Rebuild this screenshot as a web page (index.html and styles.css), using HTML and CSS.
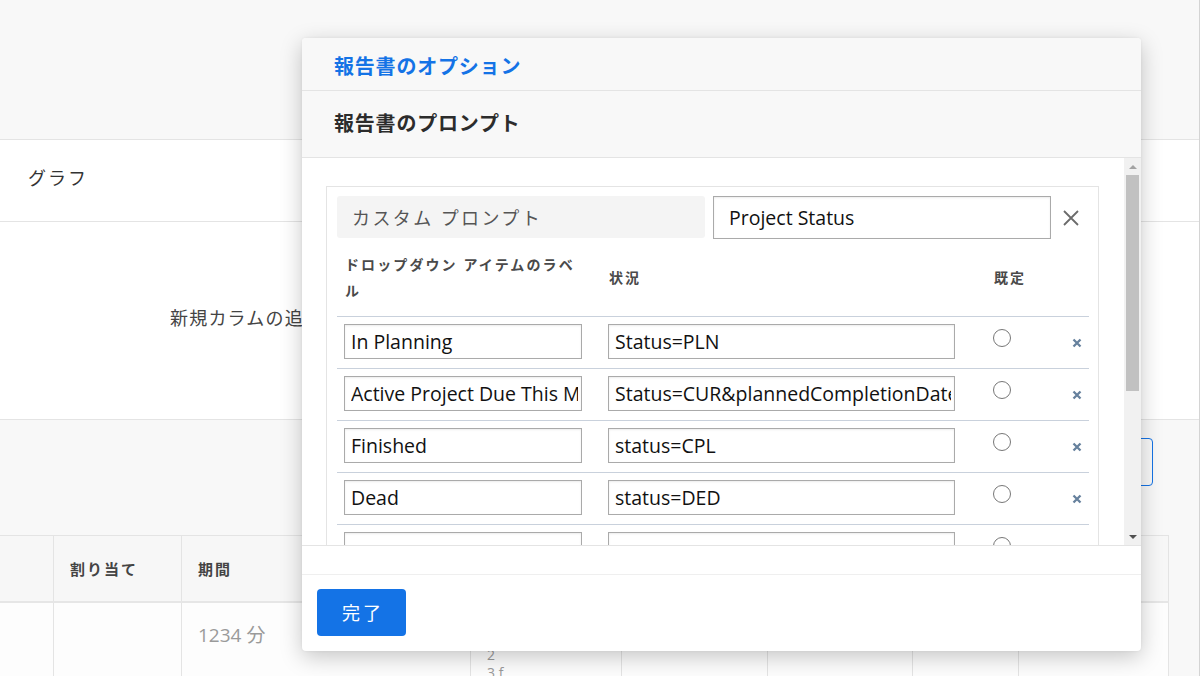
FILE: index.html
```html
<!DOCTYPE html>
<html lang="ja">
<head>
<meta charset="utf-8">
<title>報告書のオプション</title>
<link rel="stylesheet" href="styles.css">
</head>
<body>
<div class="page">
  <div class="topband"></div>
  <div class="row-graph">グラフ</div>
  <div class="row-new">新規カラムの追加</div>
  <div class="toolbar"><button class="outline-btn" type="button"></button></div>
  <div class="grid">
    <div class="grid-head">
      <div class="gc"></div>
      <div class="gc">割り当て</div>
      <div class="gc">期間</div>
      <div class="gc"></div>
      <div class="gc"></div>
      <div class="gc"></div>
      <div class="gc"></div>
      <div class="gc"></div>
    </div>
    <div class="grid-row">
      <div class="gd"></div>
      <div class="gd"></div>
      <div class="gd">1234 分</div>
      <div class="gd gd-small">1<br>2<br>3 f</div>
      <div class="gd"></div>
      <div class="gd"></div>
      <div class="gd"></div>
      <div class="gd"></div>
    </div>
  </div>
</div>

<div class="modal">
  <div class="m-head"><h1 class="m-title">報告書のオプション</h1></div>
  <div class="m-sub"><h2 class="m-subtitle">報告書のプロンプト</h2></div>
  <div class="m-body">
    <div class="m-content">
      <div class="panel">
        <div class="prompt-row">
          <div class="prompt-label">カスタム プロンプト</div>
          <input class="prompt-input" type="text" value="Project Status">
          <svg class="close" width="16" height="16" viewBox="0 0 16 16"><path d="M1 1L15 15M15 1L1 15" stroke="#6b6b6b" stroke-width="1.8" fill="none"/></svg>
        </div>
        <div class="opt-head">
          <div class="oh oh-label">ドロップダウン アイテムのラベル</div>
          <div class="oh">状況</div>
          <div class="oh">既定</div>
          <div class="oh"></div>
        </div>
        <div class="opt-row">
          <div class="oc"><input class="in in-label" type="text" value="In Planning"></div>
          <div class="oc"><input class="in in-status" type="text" value="Status=PLN"></div>
          <div class="oc oc-radio"><input class="radio" type="radio" name="def"></div>
          <div class="oc oc-x"><svg width="10" height="10" viewBox="0 0 10 10"><path d="M1.5 1.5L8.5 8.5M8.5 1.5L1.5 8.5" stroke="#66819d" stroke-width="2.3" fill="none"/></svg></div>
        </div>
        <div class="opt-row">
          <div class="oc"><input class="in in-label" type="text" value="Active Project Due This Month"></div>
          <div class="oc"><input class="in in-status" type="text" value="Status=CUR&amp;plannedCompletionDate=$$TODAYe"></div>
          <div class="oc oc-radio"><input class="radio" type="radio" name="def"></div>
          <div class="oc oc-x"><svg width="10" height="10" viewBox="0 0 10 10"><path d="M1.5 1.5L8.5 8.5M8.5 1.5L1.5 8.5" stroke="#66819d" stroke-width="2.3" fill="none"/></svg></div>
        </div>
        <div class="opt-row">
          <div class="oc"><input class="in in-label" type="text" value="Finished"></div>
          <div class="oc"><input class="in in-status" type="text" value="status=CPL"></div>
          <div class="oc oc-radio"><input class="radio" type="radio" name="def"></div>
          <div class="oc oc-x"><svg width="10" height="10" viewBox="0 0 10 10"><path d="M1.5 1.5L8.5 8.5M8.5 1.5L1.5 8.5" stroke="#66819d" stroke-width="2.3" fill="none"/></svg></div>
        </div>
        <div class="opt-row">
          <div class="oc"><input class="in in-label" type="text" value="Dead"></div>
          <div class="oc"><input class="in in-status" type="text" value="status=DED"></div>
          <div class="oc oc-radio"><input class="radio" type="radio" name="def"></div>
          <div class="oc oc-x"><svg width="10" height="10" viewBox="0 0 10 10"><path d="M1.5 1.5L8.5 8.5M8.5 1.5L1.5 8.5" stroke="#66819d" stroke-width="2.3" fill="none"/></svg></div>
        </div>
        <div class="opt-row">
          <div class="oc"><input class="in in-label" type="text" value=""></div>
          <div class="oc"><input class="in in-status" type="text" value=""></div>
          <div class="oc oc-radio"><input class="radio" type="radio" name="def"></div>
          <div class="oc oc-x"></div>
        </div>
      </div>
    </div>
    <div class="sbar">
      <div class="sb-btn"><span class="tri-up"></span></div>
      <div class="sb-thumb"></div>
      <div class="sb-track"></div>
      <div class="sb-btn"><span class="tri-down"></span></div>
    </div>
  </div>
  <div class="m-strip"></div>
  <div class="m-foot"><button class="done" type="button">完了</button></div>
</div>
</body>
</html>
```

FILE: styles.css
```css
* {
  box-sizing: border-box;
  margin: 0;
  padding: 0;
}

html, body {
  width: 1200px;
  height: 676px;
  overflow: hidden;
  background: #f8f8f8;
}

body {
  position: relative;
  font-family: "Open Sans", "Noto Sans CJK JP", sans-serif;
  color: #333;
}

.page {
  width: 1200px;
  height: 676px;
  overflow: hidden;
  background: #f8f8f8;
  border-right: 1px solid #d4d4d4;
}

.topband {
  height: 140px;
  border-bottom: 1px solid #e4e4e4;
}

.row-graph {
  height: 82px;
  background: #fff;
  border-bottom: 1px solid #e4e4e4;
  padding: 26px 0 0 28px;
  font-size: 18px;
  line-height: 24px;
  letter-spacing: 2px;
  color: #333;
}

.row-new {
  height: 197px;
  background: #fff;
  padding: 84px 0 0 170px;
  font-size: 18px;
  line-height: 24px;
  letter-spacing: 1.2px;
  color: #444;
}

.toolbar {
  height: 116px;
  border-top: 1px solid #e4e4e4;
  display: flex;
  justify-content: flex-end;
  padding: 18px 46px 0 0;
}

.outline-btn {
  width: 114px;
  height: 48px;
  border: 1px solid #1473e6;
  border-radius: 4px;
  background: transparent;
}

.grid {
  width: 1169px;
  border-top: 1px solid #e4e4e4;
  background: #fff;
}

.grid-head,
.grid-row {
  display: grid;
  grid-template-columns: 54px 128px 289px 151px 146px 145px 106px 150px;
}

.grid-head {
  height: 67px;
  background: #f7f7f7;
  border-bottom: 2px solid #e6e6e6;
}

.gc {
  border-right: 1px solid #e4e4e4;
  display: flex;
  align-items: center;
  padding-left: 16px;
  font-weight: 700;
  font-size: 15px;
  letter-spacing: 2px;
  color: #444;
}

.grid-row {
  height: 80px;
  background: #fdfdfd;
}

.gd {
  border-right: 1px solid #e4e4e4;
  padding: 20px 0 0 16px;
  color: #9a9a9a;
  font-size: 19px;
  line-height: 24px;
}

.gd-small {
  font-size: 14px;
  line-height: 18px;
  padding-top: 25px;
}

/* modal */
.modal {
  position: absolute;
  left: 302px;
  top: 38px;
  width: 839px;
  height: 613px;
  background: #fff;
  border-radius: 4px;
  box-shadow: 0 6px 22px rgba(0, 0, 0, 0.22), 0 0 3px rgba(0, 0, 0, 0.06);
  display: flex;
  flex-direction: column;
  overflow: hidden;
}

.m-head {
  height: 53px;
  flex: none;
  background: #f8f8f8;
  border-bottom: 1px solid #e4e4e4;
  padding: 2px 0 0 32px;
  display: flex;
  align-items: center;
}

.m-title {
  font-size: 20px;
  font-weight: 700;
  letter-spacing: 0.8px;
  color: #1473e6;
}

.m-sub {
  height: 67px;
  flex: none;
  background: #f8f8f8;
  border-bottom: 1px solid #e4e4e4;
  padding: 0 0 3px 32px;
  display: flex;
  align-items: center;
}

.m-subtitle {
  font-size: 20px;
  font-weight: 700;
  letter-spacing: 0.8px;
  color: #2c2c2c;
}

.m-body {
  height: 387px;
  flex: none;
  display: flex;
}

.m-content {
  flex: 1;
  overflow: hidden;
  padding: 28px 25px 0 24px;
}

.panel {
  border: 1px solid #e4e4e4;
  padding: 9px 9px 0 10px;
}

.prompt-row {
  display: flex;
  align-items: center;
  height: 43px;
}

.prompt-label {
  align-self: flex-start;
  width: 368px;
  height: 42px;
  background: #f4f4f4;
  border-radius: 3px;
  padding-left: 15px;
  display: flex;
  align-items: center;
  font-size: 18px;
  letter-spacing: 2.4px;
  color: #555;
}

.prompt-input {
  margin-left: 8px;
  width: 338px;
  height: 43px;
  border: 1px solid #aaa;
  padding: 0 4px 0 15px;
  font-family: "Open Sans", "Noto Sans CJK JP", sans-serif;
  font-size: 19.5px;
  color: #111;
  outline: none;
  box-shadow: inset 0 1px 2px rgba(0, 0, 0, 0.08);
}

.close {
  margin-left: 12px;
  flex: none;
}

.opt-head,
.opt-row {
  display: grid;
  grid-template-columns: 264px 385px 84px 1fr;
  border-bottom: 1px solid #c9d1dc;
}

.opt-head {
  height: 78px;
  align-items: center;
}

.oh {
  padding-left: 8px;
  font-weight: 700;
  font-size: 14px;
  line-height: 26px;
  letter-spacing: 2.1px;
  color: #4a4a4a;
}

.oh-label {
  max-width: 248px;
}

.opt-row {
  height: 52px;
  align-items: start;
}

.oc {
  padding: 7px 0 0 7px;
}

.in {
  display: block;
  height: 35px;
  border: 1px solid #aaa;
  padding: 0 3px 0 6px;
  font-family: "Open Sans", "Noto Sans CJK JP", sans-serif;
  font-size: 19.5px;
  color: #111;
  outline: none;
  background: #fff;
  box-shadow: inset 0 1px 2px rgba(0, 0, 0, 0.08);
}

.in-label {
  width: 238px;
}

.in-status {
  width: 347px;
}

.oc-radio {
  padding: 12px 0 0 7px;
}

.radio {
  appearance: none;
  -webkit-appearance: none;
  display: block;
  width: 18px;
  height: 18px;
  border: 1.5px solid #777;
  border-radius: 50%;
  background: #fff;
  margin: 0;
}

.oc-x {
  padding: 21px 0 0 2px;
}

.oc-x svg {
  display: block;
}

/* scrollbar */
.sbar {
  width: 17px;
  flex: none;
  background: #f1f1f1;
  display: flex;
  flex-direction: column;
  align-items: center;
}

.sb-btn {
  width: 17px;
  height: 17px;
  flex: none;
  display: flex;
  align-items: center;
  justify-content: center;
}

.tri-up {
  width: 0;
  height: 0;
  border-left: 4px solid transparent;
  border-right: 4px solid transparent;
  border-bottom: 4px solid #a3a3a3;
}

.tri-down {
  width: 0;
  height: 0;
  border-left: 4px solid transparent;
  border-right: 4px solid transparent;
  border-top: 4px solid #505050;
}

.sb-thumb {
  width: 13px;
  height: 216px;
  flex: none;
  background: #c1c1c1;
}

.sb-track {
  flex: 1;
}

.m-strip {
  height: 30px;
  flex: none;
  border-top: 1px solid #e4e4e4;
  border-bottom: 1px solid #efefef;
}

.m-foot {
  flex: 1;
  padding: 14px 15px;
}

.done {
  width: 89px;
  height: 47px;
  background: #1473e6;
  border: none;
  border-radius: 4px;
  color: #fff;
  font-family: "Open Sans", "Noto Sans CJK JP", sans-serif;
  font-size: 18px;
  letter-spacing: 3px;
  padding: 0 0 2px 3px;
}
```
